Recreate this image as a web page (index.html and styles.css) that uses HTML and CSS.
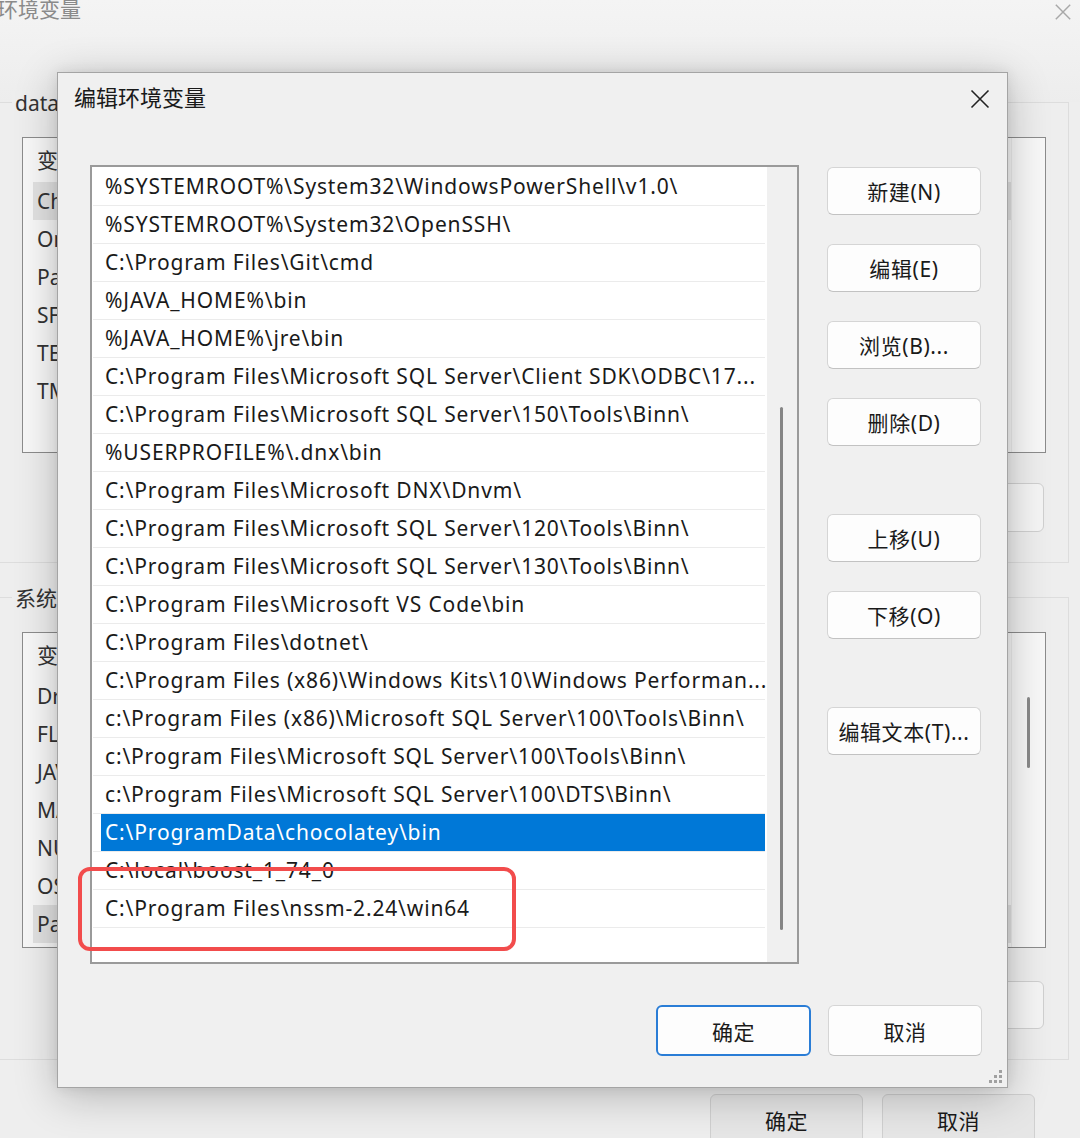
FILE: index.html
```html
<!DOCTYPE html>
<html lang="zh-CN">
<head>
<meta charset="utf-8">
<title>编辑环境变量</title>
<link rel="stylesheet" href="styles.css">
</head>
<body>
<div class="bgwin">
  <div class="bg-titlebar">
    <span class="bg-title">环境变量</span>
    <svg class="bg-close" viewBox="0 0 20 20" width="20" height="20"><path d="M2 2 L18 18 M18 2 L2 18" stroke="#a8a8a8" stroke-width="1.6" fill="none"/></svg>
  </div>

  <section class="grp">
    <div class="grp-label">data 的用户变量(U)</div>
    <div class="bglist">
      <div class="bgl-rows">
        <div class="bgl-head">变量</div>
        <div class="bgl-row sel">ChocolateyLastPathUpdate</div>
        <div class="bgl-row">OneDrive</div>
        <div class="bgl-row">Path</div>
        <div class="bgl-row">SF_HOME</div>
        <div class="bgl-row">TEMP</div>
        <div class="bgl-row">TMP</div>
      </div>
      <div class="bgl-scroll"></div>
    </div>
    <div class="bg-actions"><button class="bgbtn">删除(D)</button></div>
  </section>

  <section class="grp grp2">
    <div class="grp-label">系统变量(S)</div>
    <div class="bglist">
      <div class="bgl-rows">
        <div class="bgl-head">变量</div>
        <div class="bgl-row">DriverData</div>
        <div class="bgl-row">FLUTTER_STORAGE</div>
        <div class="bgl-row">JAVA_HOME</div>
        <div class="bgl-row">MAVEN_HOME</div>
        <div class="bgl-row">NUMBER_OF_PROCESSORS</div>
        <div class="bgl-row">OS</div>
        <div class="bgl-row sel">Path</div>
      </div>
      <div class="bgl-scroll"><div class="bgl-thumb"></div></div>
    </div>
    <div class="bg-actions"><button class="bgbtn">删除(L)</button></div>
  </section>

  <div class="bg-footer">
    <button class="bgbtn foot">确定</button>
    <button class="bgbtn foot">取消</button>
  </div>
</div>

<div class="dialog">
  <div class="dlg-titlebar">
    <span class="dlg-title">编辑环境变量</span>
    <svg class="dlg-close" viewBox="0 0 20 20" width="20" height="20"><path d="M1.5 1.5 L18.5 18.5 M18.5 1.5 L1.5 18.5" stroke="#222" stroke-width="1.6" fill="none"/></svg>
  </div>
  <div class="dlg-body">
    <div class="pathlist">
      <div class="rows">
        <div class="row">%SYSTEMROOT%\System32\WindowsPowerShell\v1.0\</div>
        <div class="row">%SYSTEMROOT%\System32\OpenSSH\</div>
        <div class="row">C:\Program Files\Git\cmd</div>
        <div class="row">%JAVA_HOME%\bin</div>
        <div class="row">%JAVA_HOME%\jre\bin</div>
        <div class="row">C:\Program Files\Microsoft SQL Server\Client SDK\ODBC\17...</div>
        <div class="row">C:\Program Files\Microsoft SQL Server\150\Tools\Binn\</div>
        <div class="row">%USERPROFILE%\.dnx\bin</div>
        <div class="row">C:\Program Files\Microsoft DNX\Dnvm\</div>
        <div class="row">C:\Program Files\Microsoft SQL Server\120\Tools\Binn\</div>
        <div class="row">C:\Program Files\Microsoft SQL Server\130\Tools\Binn\</div>
        <div class="row">C:\Program Files\Microsoft VS Code\bin</div>
        <div class="row">C:\Program Files\dotnet\</div>
        <div class="row">C:\Program Files (x86)\Windows Kits\10\Windows Performan...</div>
        <div class="row">c:\Program Files (x86)\Microsoft SQL Server\100\Tools\Binn\</div>
        <div class="row">c:\Program Files\Microsoft SQL Server\100\Tools\Binn\</div>
        <div class="row">c:\Program Files\Microsoft SQL Server\100\DTS\Binn\</div>
        <div class="row sel">C:\ProgramData\chocolatey\bin</div>
        <div class="row">C:\local\boost_1_74_0</div>
        <div class="row">C:\Program Files\nssm-2.24\win64</div>
        <div class="row"></div>
      </div>
      <div class="vscroll"><div class="vthumb"></div></div>
    </div>
    <div class="side">
      <button class="btn">新建(N)</button>
      <button class="btn">编辑(E)</button>
      <button class="btn">浏览(B)...</button>
      <button class="btn">删除(D)</button>
      <button class="btn sep">上移(U)</button>
      <button class="btn">下移(O)</button>
      <button class="btn sep">编辑文本(T)...</button>
    </div>
  </div>
  <div class="dlg-footer">
    <button class="btn ok">确定</button>
    <button class="btn">取消</button>
  </div>
  <svg class="grip" viewBox="0 0 14 14" width="14" height="14">
    <rect x="10" y="0" width="3" height="3" fill="#a0a0a0"/>
    <rect x="5" y="5" width="3" height="3" fill="#a0a0a0"/>
    <rect x="10" y="5" width="3" height="3" fill="#a0a0a0"/>
    <rect x="0" y="10" width="3" height="3" fill="#a0a0a0"/>
    <rect x="5" y="10" width="3" height="3" fill="#a0a0a0"/>
    <rect x="10" y="10" width="3" height="3" fill="#a0a0a0"/>
  </svg>
</div>

<div class="annot"></div>
</body>
</html>
```

FILE: styles.css
```css
* { box-sizing: border-box; }

html, body {
  margin: 0;
  padding: 0;
}

body {
  width: 1080px;
  height: 1138px;
  overflow: hidden;
  position: relative;
  background: #f0f0f0;
  font-family: "Noto Sans", "Noto Sans CJK SC", sans-serif;
  color: #1a1a1a;
}

button {
  font-family: inherit;
}

/* ---------- background window ---------- */
.bgwin {
  width: 1080px;
  height: 1138px;
  background: #eeeeee;
}

.bg-titlebar {
  height: 102px;
  display: flex;
  justify-content: space-between;
  align-items: flex-start;
  background: linear-gradient(#f4f4f4, #ededed);
}

.bg-title {
  font-size: 21px;
  line-height: 22px;
  margin: -2px 0 0 -3px;
  color: #8a8a8a;
}

.bg-close {
  margin: 3px 8px 0 0;
  width: 18px;
  height: 18px;
}

.grp {
  margin-left: -10px;
  width: 1079px;
  border: 1px solid #dddddd;
  padding: 0 22px 30px 31px;
}

.grp2 {
  margin-top: 34px;
}

.grp-label {
  width: max-content;
  height: 24px;
  line-height: 24px;
  margin: -12px 0 0 -10px;
  padding: 0 3px;
  font-size: 21px;
  color: #333;
  background: #eeeeee;
}

.bglist {
  margin-top: 22px;
  height: 316px;
  border: 1px solid #8c8c8c;
  background: #f8f8f8;
  display: flex;
  overflow: hidden;
}

.bgl-rows {
  flex: 1;
  font-size: 21px;
  color: #333;
}

.bgl-head {
  height: 44px;
  line-height: 44px;
  padding-left: 14px;
}

.bgl-row {
  height: 38px;
  line-height: 38px;
  margin-left: 10px;
  padding-left: 4px;
  white-space: nowrap;
}

.bgl-row.sel {
  background: #e2e2e2;
}

.bgl-scroll {
  width: 34px;
  border-left: 1px solid #ececec;
}

.bgl-thumb {
  width: 3px;
  height: 71px;
  margin: 64px 0 0 15px;
  border-radius: 2px;
  background: #8a8a8a;
}

.bg-actions {
  display: flex;
  justify-content: flex-end;
  margin-top: 30px;
  padding-right: 2px;
}

.bgbtn {
  width: 152px;
  height: 49px;
  border: 1px solid #d0d0d0;
  border-radius: 6px;
  background: #f5f5f5;
  font-size: 21px;
  color: #1a1a1a;
}

.grp2 .bg-actions {
  margin-top: 33px;
}

.grp2 .bgbtn {
  height: 48px;
}

.bg-footer {
  display: flex;
  justify-content: flex-end;
  gap: 19px;
  padding-right: 45px;
  margin-top: 34px;
}

.bgbtn.foot {
  width: 153px;
  height: 52px;
  background: #e6e6e6;
  letter-spacing: 0.6px;
}

/* ---------- dialog ---------- */
.dialog {
  position: absolute;
  left: 57px;
  top: 72px;
  width: 951px;
  height: 1016px;
  background: #f0f0f0;
  border: 1px solid #a4a4a4;
  box-shadow: 0 8px 40px rgba(0, 0, 0, 0.24), 0 0 12px rgba(0, 0, 0, 0.08);
  display: flex;
  flex-direction: column;
}

.dlg-titlebar {
  height: 45px;
  display: flex;
  align-items: center;
  justify-content: space-between;
  padding: 0 17px 0 16px;
}

.dlg-title {
  font-size: 22px;
  color: #1a1a1a;
}

.dlg-close {
  margin-top: 6px;
}

.dlg-body {
  display: flex;
  gap: 28px;
  margin-top: 47px;
  padding-left: 32px;
}

.pathlist {
  width: 709px;
  height: 799px;
  border: 2px solid #9a9a9a;
  background: #fff;
  display: flex;
  overflow: hidden;
}

.rows {
  flex: 1;
  padding: 1px 2px 0 1px;
  overflow: hidden;
}

.row {
  height: 38px;
  line-height: 37px;
  border-bottom: 1px solid #ebebeb;
  padding-left: 12px;
  font-size: 21px;
  letter-spacing: 0.85px;
  color: #1a1a1a;
  white-space: nowrap;
}

.row.sel {
  background: linear-gradient(to right, transparent 8px, #0078d7 8px);
  color: #fff;
}

.vscroll {
  width: 30px;
  background: #f0f0f0;
}

.vthumb {
  width: 3px;
  height: 523px;
  margin: 240px 0 0 13px;
  border-radius: 2px;
  background: #858585;
}

.side {
  width: 154px;
  display: flex;
  flex-direction: column;
  gap: 29px;
  padding-top: 2px;
}

.btn {
  width: 154px;
  height: 48px;
  border: 1px solid #d5d5d5;
  border-bottom-color: #c2c2c2;
  border-radius: 6px;
  background: #fdfdfd;
  font-size: 21px;
  letter-spacing: 0.6px;
  color: #1a1a1a;
  padding: 0;
}

.btn.sep {
  margin-top: 39px;
}

.dlg-footer {
  display: flex;
  justify-content: flex-end;
  gap: 17px;
  margin-top: 41px;
  padding-right: 25px;
}

.dlg-footer .btn {
  height: 51px;
}

.btn.ok {
  width: 155px;
  border: 2px solid #2a7dd6;
}

.grip {
  position: absolute;
  right: 4px;
  bottom: 3px;
}

/* ---------- annotation ---------- */
.annot {
  position: absolute;
  left: 78px;
  top: 867px;
  width: 438px;
  height: 84px;
  border: 4px solid #f24c4c;
  border-radius: 12px;
}
```
